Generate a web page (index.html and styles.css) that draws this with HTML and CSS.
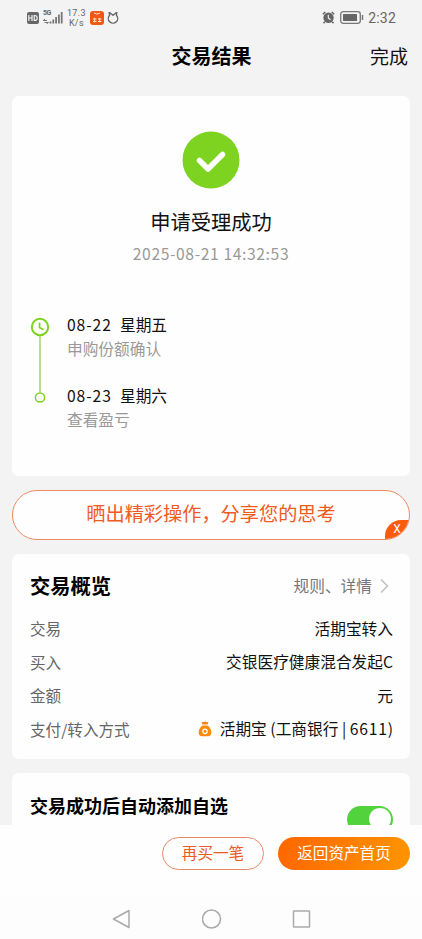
FILE: index.html
```html
<!DOCTYPE html>
<html lang="zh-CN">
<head>
    <meta charset="UTF-8">
    <meta name="viewport" content="width=device-width, initial-scale=1.0">
    <title>交易结果</title>
    <link rel="stylesheet" href="styles.css">
</head>
<body>

    <div class="status-bar">
        <svg class="hd" width="12" height="12" viewBox="0 0 12 12">
            <rect width="12" height="12" rx="2" fill="#666"/>
            <path d="M1.800 3v6M5 3v6M1.800 6H5M7.200 3.500v5h.5q2.500 0 2.500-2.500t-2.500-2.500z" fill="none" stroke="#f3f3f3" stroke-width="1.200"/>
        </svg>
        <div class="signal">
            <span class="net">5G</span>
            <svg width="20" height="13" viewBox="0 0 20 13">
                <path d="M0 9.500h4M2 8L.3 9.500M1.500 11.500h4M3.500 13l2-1.500" stroke="#777" fill="none"/>
                <path d="M7.500 12.500V10.500M10.300 12.500V8.500M13.100 12.500V6M15.900 12.500V3.500M18.700 12.500V1" stroke="#777" stroke-width="1.800"/>
            </svg>
        </div>
        <div class="speed"><span>17.3</span><span>K/s</span></div>
        <svg class="app" width="14" height="14" viewBox="0 0 14 14">
            <rect width="14" height="14" rx="3" fill="#f4560f"/>
            <path d="M4 1.800q3 2.800 6 0M3 8h3.500M3 10.500h3.500M4.700 6.800v4.500M8 8h3.500M8 10.500h3.500M9.700 6.800v4.500" fill="none" stroke="#ffe6d8" stroke-width="1"/>
        </svg>
        <svg class="ring" width="12" height="12" viewBox="0 0 12 12">
            <path d="M2.200 .3L2.600 3.200A4.700 4.700 0 1 0 9.400 3.200L9.800 .3L6 3.300z" fill="none" stroke="#666" stroke-width="1.400" stroke-linejoin="round"/>
        </svg>
        <svg class="alarm" width="13" height="13" viewBox="0 0 13 13">
            <circle cx="6.500" cy="6.700" r="5.200" fill="#666"/>
            <path d="M.8 3.200L3.300 1M12.200 3.200L9.700 1M2.800 10.800L1.500 12.300M10.200 10.800l1.300 1.500" stroke="#666" stroke-width="1.500"/>
            <path d="M6.300 3.700v3.200l2.200 1.800" fill="none" stroke="#f3f3f3" stroke-width="1.100"/>
        </svg>
        <svg class="battery" width="24" height="13" viewBox="0 0 24 13">
            <rect x=".7" y=".7" width="19.600" height="11.600" rx="2.500" fill="none" stroke="#777" stroke-width="1.300"/>
            <rect x="3" y="3" width="14" height="7" rx=".5" fill="#666"/>
            <path d="M22.500 4v5" stroke="#777" stroke-width="1.500"/>
        </svg>
        <span class="clock">2:32</span>
    </div>

    <header class="title-bar">
        <h1>交易结果</h1>
        <a class="done">完成</a>
    </header>

    <main class="content">
        <section class="card result">
            <svg class="check" width="58" height="58" viewBox="0 0 58 58">
                <circle cx="29" cy="29" r="28.500" fill="#7ed321"/>
                <path d="M17.500 29.500L26 38L40.500 23.500" fill="none" stroke="#fff" stroke-width="5.500" stroke-linecap="round" stroke-linejoin="round"/>
            </svg>
            <h2>申请受理成功</h2>
            <p class="time">2025-08-21 14:32:53</p>

            <div class="timeline">
                <svg class="track" width="20" height="90" viewBox="0 0 20 90">
                    <path d="M10 18.500V75.500" stroke="#9bd96a" stroke-width="1.500"/>
                    <circle cx="10" cy="10" r="8.200" fill="none" stroke="#7ed321" stroke-width="2"/>
                    <path d="M9.500 5.500V10.500L13.500 12.800" fill="none" stroke="#7ed321" stroke-width="1.700"/>
                    <circle cx="10" cy="80.500" r="4.600" fill="#fff" stroke="#7ed321" stroke-width="1.500"/>
                </svg>
                <div class="steps">
                    <div class="step">
                        <p class="day"><span>08-22</span>星期五</p>
                        <p class="desc">申购份额确认</p>
                    </div>
                    <div class="step">
                        <p class="day"><span>08-23</span>星期六</p>
                        <p class="desc">查看盈亏</p>
                    </div>
                </div>
            </div>
        </section>

        <div class="share">
            <span>晒出精彩操作，分享您的思考</span>
            <b class="close">X</b>
        </div>

        <section class="card overview">
            <div class="overview-head">
                <h3>交易概览</h3>
                <a class="rules">规则、详情
                    <svg width="9" height="16" viewBox="0 0 9 16"><path d="M1 1.500L7.500 8L1 14.500" fill="none" stroke="#c4c4c4" stroke-width="1.700"/></svg>
                </a>
            </div>
            <div class="row"><span class="label">交易</span><span>活期宝转入</span></div>
            <div class="row"><span class="label">买入</span><span>交银医疗健康混合发起C</span></div>
            <div class="row"><span class="label">金额</span><span>元</span></div>
            <div class="row">
                <span class="label">支付/转入方式</span>
                <span class="pay">
                    <svg width="14" height="16" viewBox="0 0 14 16">
                        <path d="M3.500.8Q5 1.500 7 .5Q9 1.500 10.500.8L9.500 3.500H4.500z" fill="#f5841f"/>
                        <path d="M4.300 4.600H9.700Q13.300 7.500 13.300 11.500Q13.300 15.300 10 15.300H4Q.7 15.300.7 11.500Q.7 7.500 4.300 4.600z" fill="#ff8a0c"/>
                        <circle cx="7" cy="10.300" r="2.200" fill="none" stroke="#fff" stroke-width="1.300"/>
                    </svg>
                    <span class="bank">活期宝 (工商银行 | <span class="digits">6611</span>)</span>
                </span>
            </div>
        </section>

        <section class="card auto">
            <h4>交易成功后自动添加自选</h4>
            <div class="switch"></div>
        </section>
    </main>

    <footer class="actions">
        <button class="btn">再买一笔</button>
        <button class="btn primary">返回资产首页</button>
    </footer>

    <nav class="sys-nav">
        <svg width="20" height="20" viewBox="0 0 20 20"><path d="M17 1.500V18.500L1.500 10z" fill="none" stroke="#aaa" stroke-width="1.500" stroke-linejoin="round"/></svg>
        <svg width="20" height="20" viewBox="0 0 20 20"><circle cx="9.500" cy="10" r="9" fill="none" stroke="#aaa" stroke-width="1.500"/></svg>
        <svg width="20" height="20" viewBox="0 0 20 20"><rect x="1.500" y="2" width="16" height="16" rx=".5" fill="none" stroke="#aaa" stroke-width="1.500"/></svg>
    </nav>

</body>
</html>
```
FILE: styles.css
```css
* {
    box-sizing: border-box;
}

body {
    margin: 0;
    height: 939px;
    display: flex;
    flex-direction: column;
    overflow: hidden;
    background-color: #f3f3f3;
    color: #111;
    font-family: "Noto Sans CJK SC", sans-serif;
    font-size: 15.7px;
}

h1, h2, h3, h4, p {
    margin: 0;
}

.status-bar {
    height: 35px;
    padding: 0 26px 0 27px;
    display: flex;
    align-items: center;
    color: #666;
    font-family: Roboto, sans-serif;
}

.signal {
    position: relative;
    height: 13px;
    margin-left: 4px;
}

.signal svg {
    display: block;
}

.net {
    position: absolute;
    left: 0;
    top: -2px;
    font-size: 7px;
    line-height: 8px;
    font-weight: bold;
    letter-spacing: -0.5px;
}

.speed {
    display: flex;
    flex-direction: column;
    align-items: center;
    margin: 1px 0 0 4px;
    font-size: 9px;
    line-height: 10px;
    letter-spacing: 0.3px;
}

.app {
    margin-left: 4px;
}

.ring {
    margin-left: 3px;
}

.alarm {
    margin-left: auto;
}

.battery {
    margin-left: 5px;
}

.clock {
    margin-left: 4px;
    font-size: 14px;
    letter-spacing: 0.2px;
}

.title-bar {
    height: 61px;
    padding: 0 0 20px 1px;
    display: grid;
    grid-template-columns: 1fr auto 1fr;
    align-items: center;
    line-height: 30px;
}

.title-bar h1 {
    grid-column: 2;
    font-size: 20px;
    color: #000;
}

.done {
    justify-self: end;
    margin-right: 14px;
    font-size: 19px;
}

.content {
    height: 729px;
    padding: 0 12px;
    overflow: hidden;
}

.card {
    background-color: #fefefe;
    border-radius: 7px;
}

.result {
    height: 380px;
    padding-top: 35px;
    text-align: center;
}

.check {
    display: block;
    margin: 0 auto;
}

.result h2 {
    margin-top: 17px;
    font-size: 20.3px;
    line-height: 30px;
    font-weight: normal;
}

.time {
    margin-top: 6px;
    color: #999;
    font-size: 15.7px;
    line-height: 24px;
    letter-spacing: 0.6px;
}

.timeline {
    display: flex;
    margin: 51px 0 0 18px;
    text-align: left;
}

.steps {
    margin: -4px 0 0 17px;
}

.step {
    height: 71px;
    line-height: 24px;
}

.day span {
    display: inline-block;
    width: 53px;
    letter-spacing: 0.9px;
}

.desc {
    color: #999;
}

.share {
    position: relative;
    height: 50px;
    margin: 14px 0;
    padding-bottom: 4px;
    display: flex;
    align-items: center;
    justify-content: center;
    border: 1px solid #ee8a60;
    border-radius: 25px;
    background-color: #fefefe;
    color: #f05a1e;
    font-size: 19.2px;
    overflow: hidden;
}

.close {
    position: absolute;
    right: 0;
    bottom: 0;
    width: 24px;
    height: 19px;
    border-radius: 16px 0 0 0;
    background-color: #fc5b0d;
    color: #fff;
    font-family: Roboto, sans-serif;
    font-size: 12px;
    line-height: 19px;
    font-weight: normal;
    text-align: center;
}

.overview {
    height: 205px;
    padding: 13px 17px 0 18px;
}

.overview-head {
    height: 45px;
    display: flex;
    justify-content: space-between;
    line-height: 36px;
}

.overview-head h3 {
    font-size: 20.3px;
    color: #000;
}

.rules {
    display: flex;
    align-items: center;
    gap: 8px;
    height: 38px;
    padding-right: 4px;
    color: #777;
}

.row {
    display: flex;
    justify-content: space-between;
    align-items: center;
    height: 33.5px;
    line-height: 24px;
}

.label {
    padding-bottom: 1px;
    color: #666;
    font-size: 15.6px;
}

.pay {
    display: flex;
    align-items: center;
    gap: 8px;
}

.digits {
    letter-spacing: 0.8px;
}

.auto {
    height: 100px;
    margin-top: 14px;
    padding: 17px 17px 0 18px;
    display: flex;
    justify-content: space-between;
}

.auto h4 {
    font-size: 18px;
    line-height: 30px;
    color: #000;
}

.switch {
    width: 46px;
    height: 27px;
    margin-top: 16px;
    padding: 2px;
    border-radius: 14px;
    background-color: #52d33d;
}

.switch::after {
    content: "";
    display: block;
    width: 22px;
    height: 22px;
    margin-left: auto;
    border-radius: 50%;
    background-color: #fff;
}

.actions {
    height: 71px;
    padding: 12px 12px 0;
    display: flex;
    justify-content: flex-end;
    align-items: flex-start;
    gap: 14px;
    background-color: #fefefe;
}

.btn {
    width: 102px;
    height: 33px;
    padding: 0 0 3px;
    border: 1px solid #e58a68;
    border-radius: 17px;
    background-color: #fefefe;
    color: #ee5a24;
    font-family: inherit;
    font-size: 15.6px;
    line-height: 27px;
}

.primary {
    width: 132px;
    border: none;
    background: linear-gradient(100deg, #ff6600, #ff9500);
    color: #fff;
}

.sys-nav {
    flex: 1;
    padding: 2px 0 0 1px;
    display: flex;
    justify-content: center;
    align-items: center;
    gap: 70px;
    background-color: #fdfdfd;
}
```
